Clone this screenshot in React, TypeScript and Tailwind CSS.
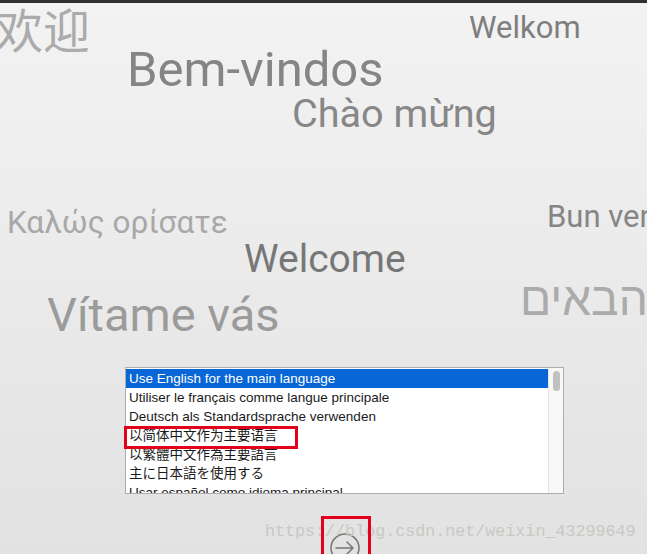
import React from 'react';

const words = [
  { text: '欢迎', cls: 'left-[-4px] top-[4px] text-[47px] text-[#ababab]', font: '"Noto Sans CJK SC", sans-serif' },
  { text: 'Welkom', cls: 'left-[469px] top-[12px] text-[31px] text-[#7e7e7e]' },
  { text: 'Bem-vindos', cls: 'left-[127px] top-[45px] text-[49px] text-[#858585]' },
  { text: 'Chào mừng', cls: 'left-[292px] top-[94px] text-[39.6px] text-[#878787]' },
  { text: 'Καλώς ορίσατε', cls: 'left-[7px] top-[207px] text-[31.5px] text-[#a8a8a8]' },
  { text: 'Bun venit', cls: 'left-[547px] top-[201px] text-[31px] text-[#858585]' },
  { text: 'Welcome', cls: 'left-[244px] top-[240px] text-[39px] text-[#777777]' },
  { text: 'Vítame vás', cls: 'left-[47px] top-[291px] text-[47px] text-[#9b9b9b]' },
  { text: 'ברוכים הבאים', cls: 'left-[520px] top-[276px] text-[46px] text-[#ababab]', font: '"Liberation Sans", sans-serif' },
];

const languages = [
  'Use English for the main language',
  'Utiliser le français comme langue principale',
  'Deutsch als Standardsprache verwenden',
  '以简体中文作为主要语言',
  '以繁體中文作為主要語言',
  '主に日本語を使用する',
  'Usar español como idioma principal',
];

export default function App() {
  return (
    <div
      className="relative w-[647px] h-[554px] overflow-hidden bg-gradient-to-b from-[#f3f3f3] to-[#e2e2e2]"
      style={{ fontFamily: 'Roboto, sans-serif' }}
    >
      <div className="h-[3px] bg-[#2f2f34]" />

      {words.map((w) => (
        <div
          key={w.text}
          className={`absolute whitespace-nowrap leading-none ${w.cls}`}
          style={w.font ? { fontFamily: w.font } : undefined}
        >
          {w.text}
        </div>
      ))}

      <div className="mt-[364px] ml-[125px] w-[439px] flex flex-col items-center gap-[39px]">
        {/* language list */}
        <div className="w-full h-[127px] border border-[#acacac] bg-white flex">
          <div className="flex-1 pt-px overflow-hidden" style={{ fontFamily: '"Liberation Sans", "Noto Sans CJK SC", sans-serif' }}>
            {languages.map((l, i) => (
              <div
                key={l}
                className={`h-[19px] pl-[3px] text-[13.5px] leading-[19px] whitespace-nowrap ${
                  i === 0 ? 'bg-[#0866d6] text-white' : 'text-[#1a1a1a]'
                }`}
              >
                {l}
              </div>
            ))}
          </div>
          <div className="w-[15px] bg-[#f8f8f8] border-l border-[#e4e4e4] pt-[3px] flex justify-center">
            <div className="w-[7px] h-[20px] rounded-full bg-[#c1c1c1]" />
          </div>
        </div>

        {/* next button */}
        <button className="w-[30px] h-[30px] shrink-0">
          <svg width="30" height="30" viewBox="0 0 30 30" fill="none" stroke="#767676" strokeWidth="1.5" strokeLinecap="round" strokeLinejoin="round">
            <circle cx="15" cy="15" r="14" />
            <path d="M6 15h17M17 9l6 6-6 6" />
          </svg>
        </button>
      </div>

      {/* watermark */}
      <div
        className="absolute left-[265px] top-[524px] text-[16.7px] leading-none text-[#c9c9c4] whitespace-nowrap"
        style={{ fontFamily: '"Liberation Mono", monospace' }}
      >
        https://blog.csdn.net/weixin_43299649
      </div>

      {/* annotation boxes */}
      <div className="absolute left-[124px] top-[426px] w-[174px] h-[23px] border-[3px] border-[#e2001a]" />
      <div className="absolute left-[321px] top-[516px] w-[50px] h-[42px] border-[3px] border-[#e2001a]" />
    </div>
  );
}
